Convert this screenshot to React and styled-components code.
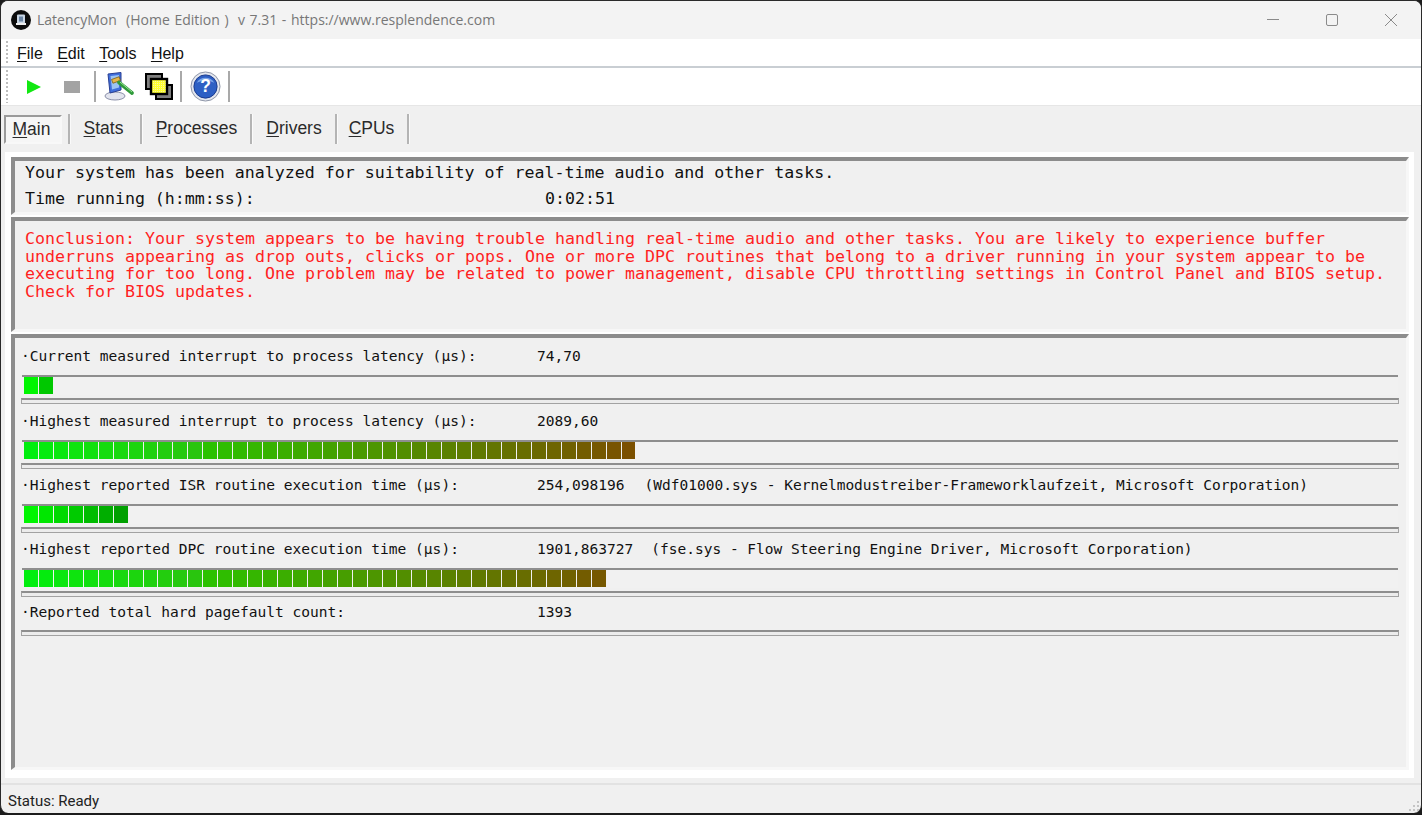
import React from 'react';
import styled, { createGlobalStyle } from 'styled-components';

const Global = createGlobalStyle`
  html, body { margin: 0; padding: 0; background: #1c1c1c; height: 815px; overflow: hidden; }
  #root { height: 815px; }
  u { text-underline-offset: 2px; text-decoration-thickness: 1px; }
`;

const Win = styled.div`
  box-sizing: border-box;
  width: 1422px;
  height: 813px;
  border: 1px solid #2a2a2a;
  border-bottom: 0;
  border-radius: 8px;
  overflow: hidden;
  background: #f0f0f0;
  display: flex;
  flex-direction: column;
`;

const TitleBar = styled.div`
  height: 38px;
  flex: none;
  background: #f3f3f3;
  display: flex;
  align-items: center;
  padding-left: 10px;
`;

const AppIcon = styled.svg`
  width: 20px;
  height: 20px;
  margin-right: 6px;
`;

const TitleText = styled.div`
  font: 14px "Open Sans", sans-serif;
  word-spacing: 1px;
  color: #777;
  white-space: pre;
  flex: 1;
  padding-bottom: 2px;
`;

const WinButton = styled.svg`
  width: ${p => p.$w}px;
  height: 20px;
  flex: none;
`;

const Bar = styled.div`
  height: ${p => p.$h}px;
  flex: none;
  background: #fff;
  display: flex;
  align-items: center;
  position: relative;
  border-bottom: ${p => p.$line};
  box-sizing: border-box;
`;

const Gripper = styled.div`
  width: 2px;
  align-self: stretch;
  margin: 2px 5px 2px 5px;
  background: repeating-linear-gradient(to bottom, #bdbdbd 0 2px, transparent 2px 4px);
  flex: none;
`;

const MenuItem = styled.span`
  font: 16px "Liberation Sans", Arial, sans-serif;
  color: #111;
  margin-right: 14.4px;
  padding-top: 2px;
  &:first-of-type { margin-left: 4px; }
`;

const ToolSlot = styled.div`
  width: ${p => p.$w}px;
  height: 100%;
  display: flex;
  align-items: center;
  justify-content: center;
  flex: none;
`;

const ToolSep = styled.div`
  width: 2px;
  height: 31px;
  margin-left: ${p => p.$ml || 0}px;
  background: #a9a9a9;
  flex: none;
`;

const TabStrip = styled.div`
  height: 46px;
  flex: none;
  background: #f0f0f0;
  display: flex;
  align-items: center;
  padding-left: 3px;
  box-sizing: border-box;
`;

const Tab = styled.div`
  box-sizing: border-box;
  height: 29px;
  font: 17.5px "Liberation Sans", Arial, sans-serif;
  color: #2a2a2a;
  display: flex;
  align-items: center;
  justify-content: center;
  width: ${p => p.$w}px;
  margin-right: ${p => p.$mr}px;
  padding-right: ${p => p.$pr || 0}px;
  ${p => p.$active ? `
    border: 2px solid;
    border-color: #9a9a9a #f8f8f8 #f8f8f8 #9a9a9a;
    background: #f6f6f6;
    padding-top: 1px;
  ` : 'padding-bottom: 2px;'}
`;

const TabSep = styled.div`
  width: 2px;
  height: 30px;
  background: #b4b4b4;
  border-right: 1px solid #fafafa;
  flex: none;
`;

const Content = styled.div`
  flex: 1;
  margin: 0 7px 5px 4px;
  background: #fff;
  padding: 5px 5px 8px 6px;
  display: flex;
  flex-direction: column;
  gap: 2px;
  min-height: 0;
`;

const Panel = styled.div`
  box-sizing: border-box;
  height: ${p => p.$h ? `${p.$h}px` : 'auto'};
  flex: ${p => p.$h ? 'none' : '1'};
  background: #f0f0f0;
  border-style: solid;
  border-width: 4px 3px 3px 4px;
  border-color: #8c8c8c #f7f7f7 #f7f7f7 #8c8c8c;
  font-family: "DejaVu Sans Mono", monospace;
  color: #111;
  white-space: pre;
`;

const SummaryLine = styled.div`
  font-size: 16.6px;
  line-height: 26px;
  padding-left: 10px;
  &:first-child { margin-top: -1px; }
`;

const ElapsedLabel = styled.span`
  display: inline-block;
  width: 520px;
`;

const Conclusion = styled.div`
  font-size: 16.63px;
  line-height: 17.6px;
  color: #ff1f1f;
  padding: 9px 0 0 10px;
`;

const Metric = styled.div`
  height: ${p => p.$h}px;
  padding: 0 7px 0 6px;
`;

const MetricText = styled.div`
  font-size: 14.55px;
  height: ${p => p.$h}px;
  line-height: ${p => p.$lh}px;
  display: flex;
`;

const Label = styled.span`
  width: 516px;
  flex: none;
`;

const Extra = styled.span`
  font-size: 14.5px;
  margin-left: ${p => p.$gap}px;
`;

const Meter = styled.div`
  margin: 0 1px 0 1px;
  height: 20px;
  background: #f1f1f1;
  border-top: 2px solid #8e8e8e;
  box-sizing: border-box;
  display: flex;
  padding-left: 2px;
  gap: 1px;
`;

const Segment = styled.div`
  width: 13.95px;
  height: 17px;
`;

const Slim = styled.div`
  box-sizing: border-box;
  height: 6px;
  margin-top: 3px;
  border: 1px solid #a2a2a2;
  border-top: 2px solid #8e8e8e;
  background: #ececec;
`;

const StatusBar = styled.div`
  height: 30px;
  flex: none;
  border-top: 2px solid #e2e2e2;
  box-sizing: border-box;
  font: 15px Roboto, "Liberation Sans", sans-serif;
  color: #222;
  padding: 7px 0 0 7px;
  position: relative;
`;

const Grip = styled.svg`
  position: absolute;
  right: 1px;
  bottom: 1px;
`;

function segColor(i, n) {
  if (n <= 7) {
    const t = i / (n - 1);
    return `rgb(0,${Math.round(245 - t * (n === 2 ? 45 : 85))},0)`;
  }
  const t = i / 40;
  const r = Math.round(123 * Math.pow(t, 0.85));
  const g = Math.round(238 - 158 * Math.pow(t, 1.05));
  const b = t < 0.3 ? 14 : 0;
  return `rgb(${r},${g},${b})`;
}

const metrics = [
  { label: '·Current measured interrupt to process latency (µs):', value: '74,70', n: 2, h: 65 },
  { label: '·Highest measured interrupt to process latency (µs):', value: '2089,60', n: 41, h: 64 },
  { label: '·Highest reported ISR routine execution time (µs):', value: '254,098196', extra: '(Wdf01000.sys - Kernelmodustreiber-Frameworklaufzeit, Microsoft Corporation)', gap: 20, n: 7, h: 64 },
  { label: '·Highest reported DPC routine execution time (µs):', value: '1901,863727', extra: '(fse.sys - Flow Steering Engine Driver, Microsoft Corporation)', gap: 18, n: 39, h: 64 },
];

const conclusion = `Conclusion: Your system appears to be having trouble handling real-time audio and other tasks. You are likely to experience buffer
underruns appearing as drop outs, clicks or pops. One or more DPC routines that belong to a driver running in your system appear to be
executing for too long. One problem may be related to power management, disable CPU throttling settings in Control Panel and BIOS setup.
Check for BIOS updates.`;

export default function App() {
  return (
    <>
      <Global />
      <Win>
        <TitleBar>
          <AppIcon viewBox="0 0 20 20">
            <circle cx="10" cy="10" r="10" fill="#0c0c0c" />
            <rect x="6" y="4.5" width="8" height="9" rx="1" fill="#c9d6e4" />
            <rect x="8" y="6.5" width="4" height="5" fill="#6b86a6" />
            <rect x="5" y="13" width="10" height="2" fill="#eee" />
          </AppIcon>
          <TitleText>LatencyMon  (Home Edition )  v 7.31 - https://www.resplendence.com</TitleText>
          <WinButton $w={60} viewBox="0 0 60 20"><line x1="24" y1="9.5" x2="36" y2="9.5" stroke="#8a8a8a" /></WinButton>
          <WinButton $w={60} viewBox="0 0 60 20"><rect x="23.5" y="4.5" width="11" height="11" rx="1.5" fill="none" stroke="#8a8a8a" /></WinButton>
          <WinButton $w={58} viewBox="0 0 58 20"><path d="M22 4 L34 16 M34 4 L22 16" stroke="#8a8a8a" fill="none" /></WinButton>
        </TitleBar>

        <Bar $h={29} $line="2px solid #c9ced3">
          <Gripper />
          <MenuItem><u>F</u>ile</MenuItem>
          <MenuItem><u>E</u>dit</MenuItem>
          <MenuItem><u>T</u>ools</MenuItem>
          <MenuItem><u>H</u>elp</MenuItem>
        </Bar>

        <Bar $h={38} $line="1px solid #e6e6e6">
          <Gripper />
          <ToolSlot $w={41}>
            <svg width="16" height="16" viewBox="0 0 16 16"><path d="M1 1 L15 8 L1 15 Z" fill="#12e812" /></svg>
          </ToolSlot>
          <ToolSlot $w={36}>
            <svg width="16" height="12" viewBox="0 0 16 12"><rect width="16" height="12" fill="#a3a3a3" /></svg>
          </ToolSlot>
          <ToolSep $ml={4} />
          <ToolSlot $w={45}>
            <svg width="30" height="29" viewBox="0 0 30 29">
              <ellipse cx="11" cy="24" rx="10" ry="4" fill="#e2e4ee" stroke="#8a8fa8" />
              <path d="M4 2 L17 0.5 L17 18 L6 21 Z" fill="#3f6fdc" stroke="#2a3f92" />
              <path d="M6.5 4 L15 3 L15 15.5 L8 17.5 Z" fill="#9cc4f2" />
              <rect x="8" y="6" width="8" height="4" fill="#e6b648" stroke="#7a5a10" strokeWidth="0.7" transform="rotate(-20 12 8)" />
              <path d="M15 10.5 L28 21" stroke="#2f9a3a" strokeWidth="3.6" strokeLinecap="round" />
              <path d="M16 10 L28 20" stroke="#97e497" strokeWidth="1" />
            </svg>
          </ToolSlot>
          <ToolSlot $w={36}>
            <svg width="28" height="27" viewBox="0 0 28 27">
              <defs>
                <pattern id="dither" width="2" height="2" patternUnits="userSpaceOnUse">
                  <rect width="2" height="2" fill="#ffff30" />
                  <rect width="1" height="1" fill="#f6f6a8" />
                </pattern>
              </defs>
              <rect x="1" y="1" width="16" height="15" fill="#7e7e7e" stroke="#000" strokeWidth="2" />
              <rect x="11" y="12" width="16" height="14" fill="#7e7e7e" stroke="#000" strokeWidth="2" />
              <rect x="6" y="6" width="16" height="15" fill="url(#dither)" stroke="#000" strokeWidth="2.4" />
            </svg>
          </ToolSlot>
          <ToolSep $ml={3} />
          <ToolSlot $w={46}>
            <svg width="31" height="31" viewBox="0 0 32 32">
              <circle cx="16" cy="16" r="15" fill="#e4e7ee" stroke="#8b93a5" />
              <circle cx="16" cy="16" r="12" fill="#2d5fc4" stroke="#1a3a8c" />
              <path d="M7 12 A10 9 0 0 1 25 12 A14 8 0 0 0 7 12 Z" fill="#7aa4e8" />
              <text x="16" y="22" textAnchor="middle" fontFamily="Liberation Sans, sans-serif" fontWeight="700" fontSize="18" fill="#fff">?</text>
            </svg>
          </ToolSlot>
          <ToolSep />
        </Bar>

        <TabStrip>
          <Tab $active $w={58} $mr={6} $pr={3}><span><u>M</u>ain</span></Tab>
          <TabSep />
          <Tab $w={69} $mr={0} $pr={4}><span><u>S</u>tats</span></Tab>
          <TabSep />
          <Tab $w={107} $mr={0}><span><u>P</u>rocesses</span></Tab>
          <TabSep />
          <Tab $w={82} $mr={0}><span><u>D</u>rivers</span></Tab>
          <TabSep />
          <Tab $w={69} $mr={0} $pr={2}><span><u>C</u>PUs</span></Tab>
          <TabSep />
        </TabStrip>

        <Content>
          <Panel $h={58}>
            <SummaryLine>Your system has been analyzed for suitability of real-time audio and other tasks.</SummaryLine>
            <SummaryLine>
              <ElapsedLabel>Time running (h:mm:ss):</ElapsedLabel>0:02:51
            </SummaryLine>
          </Panel>
          <Panel $h={115}>
            <Conclusion>{conclusion}</Conclusion>
          </Panel>
          <Panel>
            {metrics.map(m => (
              <Metric key={m.label} $h={m.h}>
                <MetricText $h={37} $lh={36}>
                  <Label>{m.label}</Label>
                  <span>{m.value}</span>
                  {m.extra && <Extra $gap={m.gap}>{m.extra}</Extra>}
                </MetricText>
                <Meter>
                  {Array.from({ length: m.n }, (_, i) => (
                    <Segment key={i} style={{ background: segColor(i, m.n) }} />
                  ))}
                </Meter>
                <Slim />
              </Metric>
            ))}
            <Metric $h={64}>
              <MetricText $h={32} $lh={34}>
                <Label>·Reported total hard pagefault count:</Label>
                <span>1393</span>
              </MetricText>
              <Slim />
            </Metric>
          </Panel>
        </Content>

        <StatusBar>
          Status: Ready
          <Grip width="12" height="12" viewBox="0 0 12 12">
            <g fill="#c4c4c4">
              <rect x="9" y="1" width="2" height="2" />
              <rect x="5" y="5" width="2" height="2" /><rect x="9" y="5" width="2" height="2" />
              <rect x="1" y="9" width="2" height="2" /><rect x="5" y="9" width="2" height="2" /><rect x="9" y="9" width="2" height="2" />
            </g>
          </Grip>
        </StatusBar>
      </Win>
    </>
  );
}
